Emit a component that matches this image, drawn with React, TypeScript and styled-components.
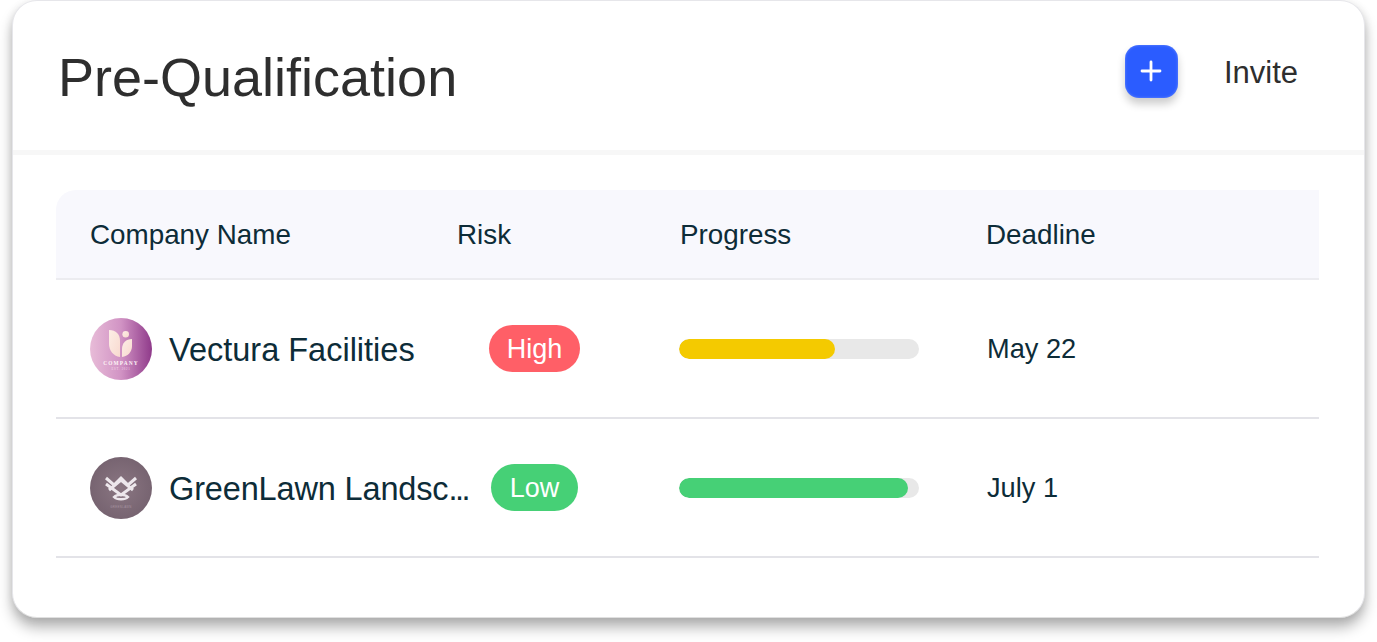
import React from "react";
import styled, { createGlobalStyle } from "styled-components";

const GlobalStyle = createGlobalStyle`
  html, body {
    margin: 0;
    padding: 0;
    background: #fff;
    font-family: "Liberation Sans", Arial, sans-serif;
  }
`;

const rows = [
  { name: "Vectura Facilities", cut: false, risk: "High", progress: 65, deadline: "May 22", logo: "vectura" },
  { name: "GreenLawn Landsc", cut: true, risk: "Low", progress: 95.5, deadline: "July 1", logo: "greenlawn" },
];

function VecturaLogo() {
  return (
    <svg width="62" height="62" viewBox="0 0 62 62">
      <defs>
        <linearGradient id="vectura" x1="0" x2="1" y1="0" y2="0">
          <stop offset="0" stopColor="#e8bcd8" />
          <stop offset="0.5" stopColor="#d193c4" />
          <stop offset="1" stopColor="#8f3a8a" />
        </linearGradient>
        <linearGradient id="petal" x1="0" x2="1" y1="0" y2="1">
          <stop offset="0" stopColor="#fdeee6" />
          <stop offset="1" stopColor="#f8d9cf" />
        </linearGradient>
      </defs>
      <circle cx="31" cy="31" r="31" fill="url(#vectura)" />
      <path d="M19 12 C26 12 30 16 30 23 V39 C23 38 19 32 19 26 Z" fill="url(#petal)" />
      <circle cx="35.700" cy="16.300" r="3.300" fill="url(#petal)" />
      <path d="M42 21 V28 C42 34 38 38 32 39 V31 C32 25 36 21 42 21 Z" fill="url(#petal)" />
      <text x="31" y="47" textAnchor="middle" fontFamily="'Liberation Serif', serif" fontSize="5.400" fontWeight="700" letterSpacing="1.100" fill="#fdf3f5">COMPANY</text>
      <text x="31" y="52" textAnchor="middle" fontFamily="'Liberation Serif', serif" fontSize="3" letterSpacing="0.7" fill="#f3dbe8">EST. 2021</text>
    </svg>
  );
}

function GreenlawnLogo() {
  return (
    <svg width="62" height="62" viewBox="0 0 62 62">
      <defs>
        <radialGradient id="greenlawn" cx="0.5" cy="0.5" r="0.55">
          <stop offset="0" stopColor="#8a7682" />
          <stop offset="1" stopColor="#75626f" />
        </radialGradient>
      </defs>
      <circle cx="31" cy="31" r="31" fill="url(#greenlawn)" />
      <g fill="none" stroke="#ede7ec" strokeWidth="3">
        <path d="M16 21 L24 28 L31 21 L38 28 L46 21" />
        <path d="M16 27 L31 38 L46 27" />
        <path d="M19 33 L31 23 L43 33" />
        <path d="M24 40 C27 37 35 37 38 40 C35 43 27 43 24 40 Z" strokeWidth="2.400" />
      </g>
      <text x="31" y="51" textAnchor="middle" fontFamily="'Liberation Sans', sans-serif" fontSize="2.800" letterSpacing="0.4" fill="#a995a3">GREENLAWN</text>
    </svg>
  );
}

export default function App() {
  return (
    <>
      <GlobalStyle />
      <Page>
        <Card>
          <Header>
            <Title>Pre-Qualification</Title>
            <InviteGroup>
              <AddButton aria-label="Add">
                <svg width="22" height="22" viewBox="0 0 22 22" fill="none">
                  <path d="M2 11 H20 M11 2 V20" stroke="#fff" strokeWidth="2.800" strokeLinecap="round" />
                </svg>
              </AddButton>
              <InviteLabel>Invite</InviteLabel>
            </InviteGroup>
          </Header>
          <TableWrap>
            <HeadRow>
              <HeadCell>Company Name</HeadCell>
              <HeadCell>Risk</HeadCell>
              <HeadCell>Progress</HeadCell>
              <HeadCell>Deadline</HeadCell>
            </HeadRow>
            {rows.map((row) => (
              <Row key={row.name}>
                <CompanyCell>
                  <Avatar>{row.logo === "vectura" ? <VecturaLogo /> : <GreenlawnLogo />}</Avatar>
                  <CompanyName $cut={row.cut}>
                    {row.name}
                    {row.cut && <Dots>...</Dots>}
                  </CompanyName>
                </CompanyCell>
                <RiskCell>
                  <RiskBadge $risk={row.risk}>{row.risk}</RiskBadge>
                </RiskCell>
                <Track>
                  <Fill $risk={row.risk} style={{ width: `${row.progress}%` }} />
                </Track>
                <Deadline>{row.deadline}</Deadline>
              </Row>
            ))}
          </TableWrap>
        </Card>
      </Page>
    </>
  );
}

const Page = styled.div`
  width: 1377px;
  height: 642px;
  padding-left: 12px;
  box-sizing: border-box;
  overflow: hidden;
`;

const Card = styled.div`
  width: 1353px;
  height: 618px;
  box-sizing: border-box;
  background: #fff;
  border: 1px solid #e6e6ea;
  border-bottom-color: #e0e0e0;
  border-radius: 25px;
  box-shadow: 0 10px 14px rgba(0, 0, 0, 0.28), 0 2px 8px rgba(0, 0, 0, 0.1);
`;

const Header = styled.div`
  height: 154px;
  box-sizing: border-box;
  border-bottom: 5px solid #f7f7f7;
  display: flex;
  align-items: center;
  justify-content: space-between;
  padding: 0 66px 9px 45px;
`;

const Title = styled.h1`
  margin: 0;
  padding-top: 11px;
  font-size: 54px;
  font-weight: 400;
  color: #2e2e2e;
`;

const InviteGroup = styled.div`
  display: flex;
  align-items: center;
  gap: 46px;
`;

const AddButton = styled.button`
  width: 53px;
  height: 53px;
  padding: 0;
  display: flex;
  align-items: center;
  justify-content: center;
  border: none;
  border-radius: 14px;
  background: #2b5cff;
  box-shadow: inset 0 0 3px rgba(255, 255, 255, 0.3), 0 6px 9px rgba(0, 0, 0, 0.2);
`;

const InviteLabel = styled.span`
  padding-top: 3px;
  font-size: 31px;
  color: #2e2e2e;
`;

const TableWrap = styled.div`
  margin: 35px 45px 0 43px;
`;

const columns = "367px 223px 306px 1fr";

const HeadRow = styled.div`
  display: grid;
  grid-template-columns: ${columns};
  align-items: center;
  height: 90px;
  box-sizing: border-box;
  padding-left: 34px;
  background: #f8f8fd;
  border-bottom: 2px solid #ececf0;
  border-radius: 20px 0 0 0;
`;

const HeadCell = styled.div`
  padding-top: 1px;
  font-size: 27.800px;
  color: #0d2c38;
`;

const Row = styled.div`
  display: grid;
  grid-template-columns: ${columns};
  align-items: center;
  height: 139px;
  box-sizing: border-box;
  padding-left: 34px;
  border-bottom: 2px solid #e3e3e8;
`;

const CompanyCell = styled.div`
  display: flex;
  align-items: center;
  gap: 17px;
`;

const Avatar = styled.div`
  width: 62px;
  height: 62px;
  flex: none;
  svg {
    display: block;
  }
`;

const CompanyName = styled.div<{ $cut: boolean }>`
  padding-top: 4px;
  font-size: 32.500px;
  letter-spacing: ${(p) => (p.$cut ? "-0.15px" : "0")};
  color: #0d2c38;
  white-space: nowrap;
`;

const Dots = styled.span`
  letter-spacing: -2.500px;
`;

const RiskCell = styled.div`
  width: 155px;
  display: flex;
  justify-content: center;
`;

const RiskBadge = styled.div<{ $risk: string }>`
  height: 47px;
  padding: 2px ${(p) => (p.$risk === "High" ? "18px" : "19px")} 0;
  box-sizing: border-box;
  display: flex;
  align-items: center;
  border-radius: 24px;
  font-size: 27px;
  color: #fff;
  background: ${(p) => (p.$risk === "High" ? "#ff5f67" : "#46d076")};
`;

const Track = styled.div`
  width: 240px;
  height: 20px;
  margin-left: -1px;
  border-radius: 10px;
  background: #e8e8e8;
  overflow: hidden;
`;

const Fill = styled.div<{ $risk: string }>`
  height: 100%;
  border-radius: 10px;
  background: ${(p) => (p.$risk === "High" ? "#f4ca00" : "#46d076")};
`;

const Deadline = styled.div`
  padding: 1px 0 0 1px;
  font-size: 27.200px;
  color: #0d2c38;
`;
